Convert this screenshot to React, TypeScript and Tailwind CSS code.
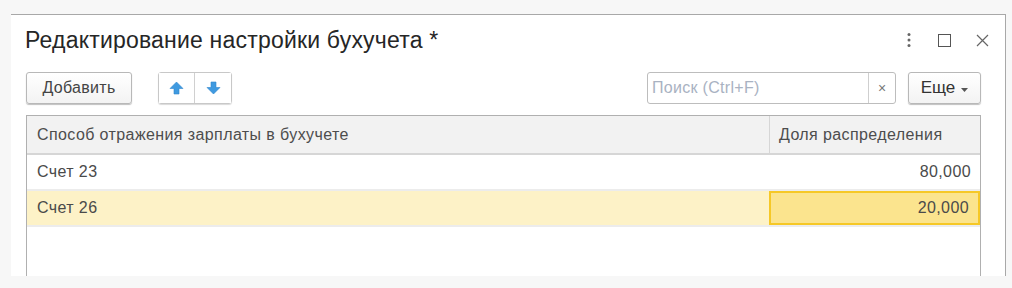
import React from "react";

const font = { fontFamily: '"Liberation Sans", Arial, sans-serif' };

const ArrowUp: React.FC = () => (
  <svg width="15" height="14" viewBox="0 0 15 14">
    <path d="M7.5 1 L14 7.5 L10 7.5 L10 13 L5 13 L5 7.5 L1 7.5 Z" fill="#3f9ae0" stroke="#2f86cc" strokeWidth="0.6" />
  </svg>
);

const ArrowDown: React.FC = () => (
  <svg width="15" height="14" viewBox="0 0 15 14">
    <path d="M7.5 13 L14 6.5 L10 6.5 L10 1 L5 1 L5 6.5 L1 6.5 Z" fill="#3f9ae0" stroke="#2f86cc" strokeWidth="0.6" />
  </svg>
);

const rows = [
  { name: "Счет 23", share: "80,000", selected: false },
  { name: "Счет 26", share: "20,000", selected: true },
];

const App: React.FC = () => {
  return (
    <div className="h-[288px] w-[1012px] overflow-hidden bg-[#f7f7f7] pl-[11px] pt-[14px]" style={font}>
      <div className="h-[262px] w-[995px] overflow-hidden border-t border-r border-[#a8a8a8] bg-white">
        {/* Title */}
        <div className="flex h-[50px] items-center pl-[14px] pr-[16px]">
          <h1 className="flex-1 text-[23px] leading-none tracking-[0.2px] text-[#262626]">
            Редактирование настройки бухучета *
          </h1>
          <div className="flex items-center">
            <svg width="6" height="16" viewBox="0 0 6 16" className="mr-[26px]">
              <circle cx="3" cy="2.5" r="1.5" fill="#666" />
              <circle cx="3" cy="8" r="1.5" fill="#666" />
              <circle cx="3" cy="13.5" r="1.5" fill="#666" />
            </svg>
            <svg width="13" height="13" viewBox="0 0 13 13" className="mr-[25px]">
              <rect x="0.5" y="0.5" width="12" height="12" fill="none" stroke="#555" strokeWidth="1" />
            </svg>
            <svg width="13" height="13" viewBox="0 0 13 13">
              <path d="M1 1 L12 12 M12 1 L1 12" stroke="#666" strokeWidth="1.2" />
            </svg>
          </div>
        </div>

        {/* Toolbar */}
        <div className="mt-[7px] flex h-[32px] items-stretch pl-[15px] pr-[24px]">
          <button className="w-[106px] rounded-[3px] border border-[#b8b8b8] bg-gradient-to-b from-white to-[#f3f3f3] text-[16px] tracking-[0.3px] text-[#444] shadow-[0_1px_1px_rgba(0,0,0,0.25)]">
            Добавить
          </button>
          <div className="ml-[26px] flex rounded-[3px] border border-[#c8c8c8] shadow-[0_1px_1px_rgba(0,0,0,0.15)]">
            <button className="flex w-[36px] items-center justify-center border-r border-[#d0d0d0] bg-white">
              <ArrowUp />
            </button>
            <button className="flex w-[36px] items-center justify-center bg-white">
              <ArrowDown />
            </button>
          </div>
          <div className="flex-1" />
          <div className="flex rounded-[3px] border border-[#bdbdbd]">
            <input
              placeholder="Поиск (Ctrl+F)"
              className="w-[221px] border-r border-[#cfcfcf] px-[4px] text-[16px] tracking-[0.3px] text-[#333] outline-none placeholder:text-[#a9b2c2]"
            />
            <button className="flex w-[26px] items-center justify-center text-[14px] text-[#777]">
              ×
            </button>
          </div>
          <button className="ml-[12px] flex w-[73px] items-center justify-center gap-[6px] rounded-[3px] border border-[#b8b8b8] bg-gradient-to-b from-white to-[#f3f3f3] text-[17px] text-[#333] shadow-[0_1px_1px_rgba(0,0,0,0.25)]">
            Еще
            <svg width="7" height="4" viewBox="0 0 7 4" className="mt-[3px]">
              <path d="M0 0 L7 0 L3.5 4 Z" fill="#555" />
            </svg>
          </button>
        </div>

        {/* Table */}
        <div className="ml-[15px] mt-[11px] h-[200px] w-[955px] border-x border-t border-[#b0b0b0] text-[16px] tracking-[0.4px]">
          <div className="flex h-[39px] border-b-2 border-[#d6d6d6] bg-[#f2f2f2] text-[#4d4d4d]">
            <div className="flex w-[742px] items-center pl-[10px]">Способ отражения зарплаты в бухучете</div>
            <div className="flex flex-1 items-center border-l border-[#d6d6d6] pl-[9px]">Доля распределения</div>
          </div>
          {rows.map((row) => (
            <div
              key={row.name}
              className={`flex h-[36px] border-b-2 border-[#ececec] text-[#4a4a4a] ${
                row.selected ? "bg-[#fdf2c7]" : "bg-white"
              }`}
            >
              <div className="flex w-[742px] items-center pl-[10px]">{row.name}</div>
              <div
                className={`flex flex-1 items-center justify-end pr-[9px] ${
                  row.selected ? "border-2 border-[#f6c826] bg-[#fbe48e]" : ""
                }`}
              >
                {row.share}
              </div>
            </div>
          ))}
        </div>
      </div>
    </div>
  );
};

export default App;
